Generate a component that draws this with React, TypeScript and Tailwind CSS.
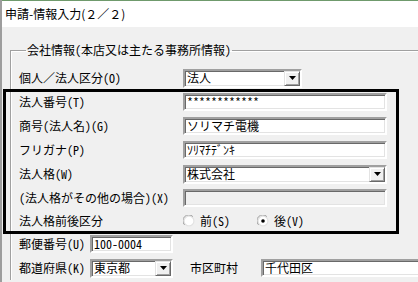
import type { ReactNode } from "react";

// classic Win32 sunken edit border
const sunken =
  "border-2 border-t-[#a0a0a0] border-l-[#a0a0a0] border-r-white border-b-white shadow-[inset_1px_1px_0_#696969,inset_-1px_-1px_0_#e3e3e3]";

function Row({ label, children, h = "h-[24px]", labelW = "w-[164px]" }: { label: ReactNode; children: ReactNode; h?: string; labelW?: string }) {
  return (
    <div className={`flex items-center ${h}`}>
      <span className={`${labelW} shrink-0 whitespace-nowrap`}>{label}</span>
      {children}
    </div>
  );
}

function TextBox({ value = "", w = "w-[204px]", disabled = false }: { value?: string; w?: string; disabled?: boolean }) {
  return (
    <div className={`${w} h-[18px] ${sunken} ${disabled ? "bg-[#f0f0f0]" : "bg-white"} flex items-center pl-[2px] whitespace-nowrap overflow-hidden`}>
      {value}
    </div>
  );
}

function Combo({ value, w }: { value: string; w: string }) {
  return (
    <div className={`${w} h-[19px] ${sunken} bg-white flex items-center justify-between pl-[2px]`}>
      <span className="whitespace-nowrap">{value}</span>
      <div className="w-[16px] h-[15px] border border-t-[#e3e3e3] border-l-[#e3e3e3] border-r-[#696969] border-b-[#696969] shadow-[inset_1px_1px_0_#fff,inset_-1px_-1px_0_#a0a0a0] bg-[#f0f0f0] flex items-center justify-center">
        <svg width="7" height="4" viewBox="0 0 7 4">
          <path d="M0 0h7L3.5 4z" fill="#000" />
        </svg>
      </div>
    </div>
  );
}

function Radio({ label, checked = false }: { label: string; checked?: boolean }) {
  return (
    <div className="flex items-center gap-[5px]">
      <svg width="12" height="12" viewBox="0 0 12 12">
        <circle cx="6" cy="6" r="5.5" fill="#e3e3e3" />
        <path d="M1.6 9.9A5.5 5.5 0 0 1 9.9 1.6" stroke="#a0a0a0" strokeWidth="1" fill="none" />
        <circle cx="6" cy="6" r="4.3" fill="#fff" />
        {checked && <circle cx="6" cy="6" r="1.8" fill="#000" />}
      </svg>
      <span>{label}</span>
    </div>
  );
}

export default function App() {
  return (
    <div className="relative w-[418px] h-[282px] overflow-hidden bg-[#f0f0f0] text-black text-[12px] leading-[14px] font-['Noto_Sans_CJK_JP','Noto_Sans',sans-serif] [font-feature-settings:'hwid']">
      <div className="h-full border-l-2 border-[#9d9d9d]">
        <div className="h-[27px] bg-white border-t border-t-[#6f9a6c] flex items-center pl-[3px] [font-feature-settings:normal]">
          申請-情報入力(２／２)
        </div>

        <div className="pl-[8px] pt-[16px]">
          <fieldset className="w-[440px] border-t border-l border-[#a0a0a0] shadow-[inset_1px_1px_0_#fff] pl-[8px] pt-[9px]">
            <legend className="ml-[7px] px-[1px]">会社情報(本店又は主たる事務所情報)</legend>

            <Row
              label={
                <>
                  個人<span className="[font-feature-settings:normal]">／</span>法人区分(O)
                </>
              }
            >
              <Combo value="法人" w="w-[119px]" />
            </Row>
            <Row label="法人番号(T)">
              <TextBox value="************" />
            </Row>
            <Row label="商号(法人名)(G)">
              <TextBox value="ソリマチ電機" />
            </Row>
            <Row label="フリガナ(P)">
              <TextBox value="ｿﾘﾏﾁﾃﾞﾝｷ" />
            </Row>
            <Row label="法人格(W)">
              <Combo value="株式会社" w="w-[204px]" />
            </Row>
            <Row label="(法人格がその他の場合)(X)">
              <TextBox disabled />
            </Row>
            <Row label="法人格前後区分" h="h-[22px]">
              <div className="flex items-center gap-[27px]">
                <Radio label="前(S)" />
                <Radio label="後(V)" checked />
              </div>
            </Row>
            <Row label="郵便番号(U)" labelW="w-[71px]">
              <TextBox value="100-0004" w="w-[83px]" />
            </Row>
            <Row label="都道府県(K)" labelW="w-[71px]">
              <Combo value="東京都" w="w-[83px]" />
              <span className="ml-[17px] w-[71px] shrink-0">市区町村</span>
              <TextBox value="千代田区" w="w-[170px]" />
            </Row>
          </fieldset>
        </div>
      </div>

      {/* highlight frame drawn over the form */}
      <div className="absolute left-[3px] top-[89px] w-[396px] h-[145px] border-[3px] border-black pointer-events-none" />
    </div>
  );
}
